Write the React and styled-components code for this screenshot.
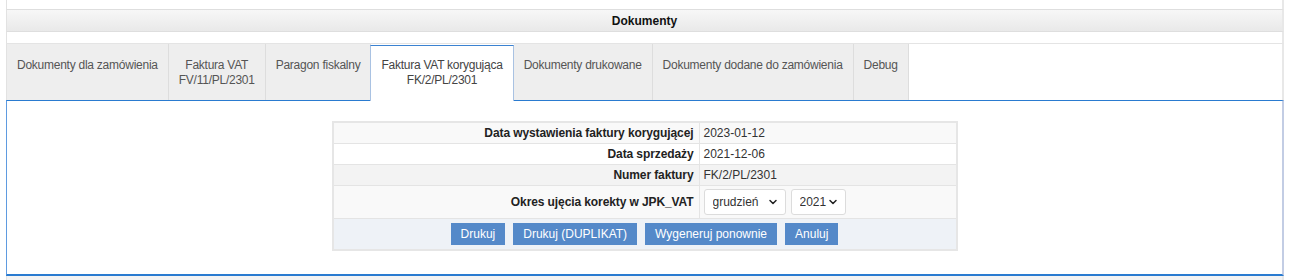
import React from 'react';
import styled, { createGlobalStyle } from 'styled-components';
import { ChevronDown } from 'lucide-react';

const Global = createGlobalStyle`
  html, body {
    margin: 0;
    padding: 0;
    background: #ffffff;
    font-family: 'Liberation Sans', Arial, Helvetica, sans-serif;
    font-size: 12px;
    color: #333;
  }
`;

const Wrapper = styled.div`
  margin-left: 6px;
  width: 1278px;
`;

const Side = styled.div`
  border-left: 1px solid #e2e2e2;
  border-right: 2px solid #e8e8e8;
  box-sizing: border-box;
`;

const TopSpace = styled(Side)`
  height: 9px;
`;

const Header = styled(Side)`
  height: 23px;
  border-top: 1px solid #dedede;
  border-bottom: 1px solid #dedede;
  background: linear-gradient(#f7f7f7, #e9e9e9);
  display: flex;
  align-items: center;
  justify-content: center;
  font-weight: bold;
  color: #111;
`;

const Gap = styled(Side)`
  height: 11px;
`;

const TabBar = styled(Side)`
  display: flex;
  height: 57px;
  border-top: 1px solid #e4e4e4;
`;

const Tab = styled.div`
  box-sizing: border-box;
  padding: 14px 10px 0;
  line-height: 15px;
  letter-spacing: -0.25px;
  text-align: center;
  white-space: nowrap;
  color: ${p => (p.$active ? '#444' : '#555')};
  background: ${p => (p.$active ? '#ffffff' : '#eeeeee')};
  border-right: 1px solid #dddddd;
  ${p =>
    p.$active &&
    `
    position: relative;
    z-index: 1;
    margin-top: 1px;
    margin-bottom: -1px;
    margin-left: -1px;
    border: 1px solid #a9c2e2;
    border-top-color: #3b82d1;
    border-bottom: none;
    padding-top: 12px;
  `}
`;

const Panel = styled.div`
  border-top: 1px solid #2a7bd0;
  border-left: 1px solid #5f9be0;
  border-right: 2px solid #c3cde4;
  border-bottom: 2px solid #2a7bd0;
  padding: 20px 0 23px;
  display: flex;
  justify-content: center;
`;

const Footer = styled(Side)`
  height: 6px;
  background: #f3f3f3;
`;

const Table = styled.table`
  width: 626px;
  border-collapse: collapse;
  border: 2px solid #e6e6e6;
`;

const Row = styled.tr`
  background: ${p => p.$bg};
`;

const Label = styled.td`
  border: 1px solid #e4e4e4;
  padding: 3px 5px;
  line-height: 14px;
  text-align: right;
  font-weight: bold;
  color: #222;
  width: 355px;
  white-space: nowrap;
  letter-spacing: -0.1px;
`;

const Value = styled.td`
  border: 1px solid #e4e4e4;
  padding: 3px 5px 3px 4px;
  line-height: 14px;
  color: #333;
`;

const Selects = styled.div`
  display: flex;
  gap: 5px;
`;

const SelectBox = styled.div`
  position: relative;
  width: ${p => p.$w}px;
  height: 26px;
`;

const Select = styled.select`
  appearance: none;
  width: 100%;
  height: 100%;
  box-sizing: border-box;
  border: 1px solid #dcdcdc;
  border-radius: 3px;
  background: #fff;
  padding: 0 8px;
  font-family: inherit;
  font-size: 12px;
  color: #333;
`;

const Chevron = styled(ChevronDown)`
  position: absolute;
  right: 7px;
  top: 7px;
  pointer-events: none;
  color: #222;
`;

const ButtonCell = styled.td`
  border: 1px solid #e4e4e4;
  padding: 4px 5px;
`;

const Buttons = styled.div`
  display: flex;
  justify-content: center;
  gap: 8px;
`;

const Button = styled.button`
  height: 22px;
  padding: 0 10px;
  border: none;
  background: #5489c9;
  color: #fff;
  font-family: inherit;
  font-size: 12px;
  cursor: pointer;
`;

const tabs = [
  ['Dokumenty dla zamówienia'],
  ['Faktura VAT', 'FV/11/PL/2301'],
  ['Paragon fiskalny'],
  ['Faktura VAT korygująca', 'FK/2/PL/2301'],
  ['Dokumenty drukowane'],
  ['Dokumenty dodane do zamówienia'],
  ['Debug'],
];

export default function App() {
  return (
    <Wrapper>
      <Global />
      <TopSpace />
      <Header>Dokumenty</Header>
      <Gap />
      <TabBar>
        {tabs.map((t, i) => (
          <Tab key={i} $active={i === 3}>
            {t.map((line, j) => (
              <div key={j}>{line}</div>
            ))}
          </Tab>
        ))}
      </TabBar>
      <Panel>
        <Table>
          <tbody>
            <Row $bg="#f9f9f9">
              <Label>Data wystawienia faktury korygującej</Label>
              <Value>2023-01-12</Value>
            </Row>
            <Row $bg="#ffffff">
              <Label>Data sprzedaży</Label>
              <Value>2021-12-06</Value>
            </Row>
            <Row $bg="#f3f3f3">
              <Label>Numer faktury</Label>
              <Value>FK/2/PL/2301</Value>
            </Row>
            <Row $bg="#f9f9f9">
              <Label>Okres ujęcia korekty w JPK_VAT</Label>
              <Value>
                <Selects>
                  <SelectBox $w={82}>
                    <Select defaultValue="12">
                      <option value="12">grudzień</option>
                    </Select>
                    <Chevron size={12} strokeWidth={3} />
                  </SelectBox>
                  <SelectBox $w={55}>
                    <Select defaultValue="2021">
                      <option value="2021">2021</option>
                    </Select>
                    <Chevron size={12} strokeWidth={3} />
                  </SelectBox>
                </Selects>
              </Value>
            </Row>
            <Row $bg="#eef2f7">
              <ButtonCell colSpan={2}>
                <Buttons>
                  <Button>Drukuj</Button>
                  <Button>Drukuj (DUPLIKAT)</Button>
                  <Button>Wygeneruj ponownie</Button>
                  <Button>Anuluj</Button>
                </Buttons>
              </ButtonCell>
            </Row>
          </tbody>
        </Table>
      </Panel>
      <Footer />
    </Wrapper>
  );
}
